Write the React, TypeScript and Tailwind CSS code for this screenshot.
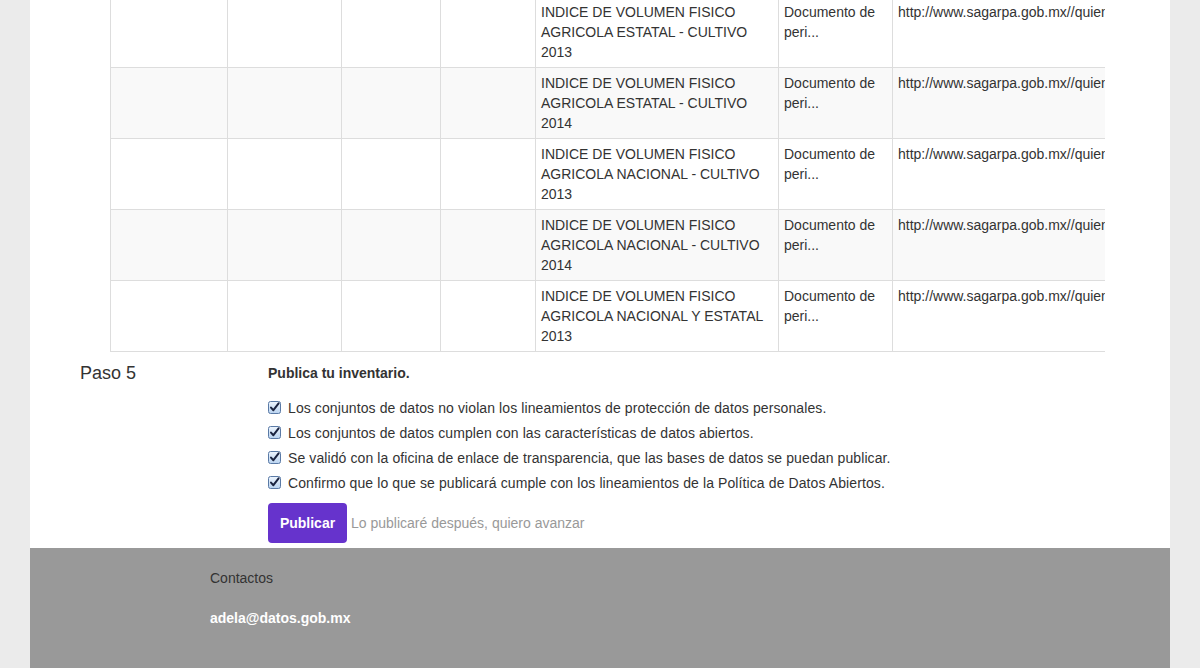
import React from "react";

const rows = [
  { l1: "INDICE DE VOLUMEN FISICO", l2: "AGRICOLA ESTATAL - CULTIVO", l3: "2013" },
  { l1: "INDICE DE VOLUMEN FISICO", l2: "AGRICOLA ESTATAL - CULTIVO", l3: "2014" },
  { l1: "INDICE DE VOLUMEN FISICO", l2: "AGRICOLA NACIONAL - CULTIVO", l3: "2013" },
  { l1: "INDICE DE VOLUMEN FISICO", l2: "AGRICOLA NACIONAL - CULTIVO", l3: "2014" },
  { l1: "INDICE DE VOLUMEN FISICO", l2: "AGRICOLA NACIONAL Y ESTATAL", l3: "2013" },
];

const checks = [
  "Los conjuntos de datos no violan los lineamientos de protección de datos personales.",
  "Los conjuntos de datos cumplen con las características de datos abiertos.",
  "Se validó con la oficina de enlace de transparencia, que las bases de datos se puedan publicar.",
  "Confirmo que lo que se publicará cumple con los lineamientos de la Política de Datos Abiertos.",
];

function CheckIcon() {
  return (
    <svg width="13" height="13" viewBox="0 0 13 13" className="shrink-0">
      <defs>
        <linearGradient id="cbg" x1="0" y1="0" x2="0" y2="1">
          <stop offset="0" stopColor="#eef5fd" />
          <stop offset="1" stopColor="#b9d3f0" />
        </linearGradient>
      </defs>
      <rect x="0.5" y="0.5" width="12" height="12" rx="2" fill="url(#cbg)" stroke="#5a7aa6" />
      <path d="M3 6.6 L5.4 9.2 L10.6 2.4" fill="none" stroke="#1b2440" strokeWidth="2" strokeLinecap="round" strokeLinejoin="round" />
    </svg>
  );
}

export default function App() {
  return (
    <div
      className="min-h-screen bg-[#ebebeb] text-[14px] text-[#333333] overflow-hidden"
      style={{ fontFamily: '"Liberation Sans", Arial, Helvetica, sans-serif' }}
    >
      <div className="mx-[30px] bg-white">
        <div className="ml-[80px] w-[995px] overflow-hidden -mt-[4px]">
          <table className="border-collapse table-fixed w-[1300px] leading-[20px]">
            <colgroup>
              <col className="w-[117px]" />
              <col className="w-[114px]" />
              <col className="w-[99px]" />
              <col className="w-[95px]" />
              <col className="w-[243px]" />
              <col className="w-[114px]" />
              <col className="w-[518px]" />
            </colgroup>
            <tbody>
              {rows.map((r, i) => (
                <tr key={i} className={i % 2 === 1 ? "bg-[#f9f9f9]" : "bg-white"}>
                  <td className="border border-[#dddddd] p-[5px] h-[71px]"></td>
                  <td className="border border-[#dddddd] p-[5px]"></td>
                  <td className="border border-[#dddddd] p-[5px]"></td>
                  <td className="border border-[#dddddd] p-[5px]"></td>
                  <td className="border border-[#dddddd] px-[5px] pt-[5px] pb-[5px] align-top whitespace-nowrap">
                    <div>{r.l1}</div>
                    <div>{r.l2}</div>
                    <div>{r.l3}</div>
                  </td>
                  <td className="border border-[#dddddd] px-[5px] pt-[5px] pb-[5px] align-top whitespace-nowrap">
                    <div>Documento de</div>
                    <div>peri...</div>
                  </td>
                  <td className="border border-[#dddddd] px-[5px] pt-[5px] pb-[5px] align-top whitespace-nowrap">
                    http://www.sagarpa.gob.mx//quienesomos/datosabiertos/siap/Paginas/indice_volumen_fisico.aspx
                  </td>
                </tr>
              ))}
            </tbody>
          </table>
        </div>

        <div className="flex pl-[50px] pt-[11px] pb-[5px]">
          <div className="w-[188px] text-[18px] leading-[20px]">Paso 5</div>
          <div className="flex flex-col">
            <div className="font-bold leading-[20px]">Publica tu inventario.</div>
            <div className="mt-[12px] flex flex-col">
              {checks.map((c, i) => (
                <div key={i} className="flex items-center gap-[7px] h-[25px]">
                  <CheckIcon />
                  <span className="leading-[20px] tracking-[0.1px]">{c}</span>
                </div>
              ))}
            </div>
            <div className="mt-[8px] flex items-center gap-[4px]">
              <button className="h-[40px] w-[79px] rounded-[4px] bg-[#6633cc] text-white font-bold text-[14px]">
                Publicar
              </button>
              <span className="text-[#999999]">Lo publicaré después, quiero avanzar</span>
            </div>
          </div>
        </div>

        <footer className="bg-[#999999] h-[140px] pl-[180px] pt-[20px]">
          <div className="leading-[20px] text-[#333333]">Contactos</div>
          <div className="mt-[20px] leading-[20px] text-white font-bold">adela@datos.gob.mx</div>
        </footer>
      </div>
    </div>
  );
}
